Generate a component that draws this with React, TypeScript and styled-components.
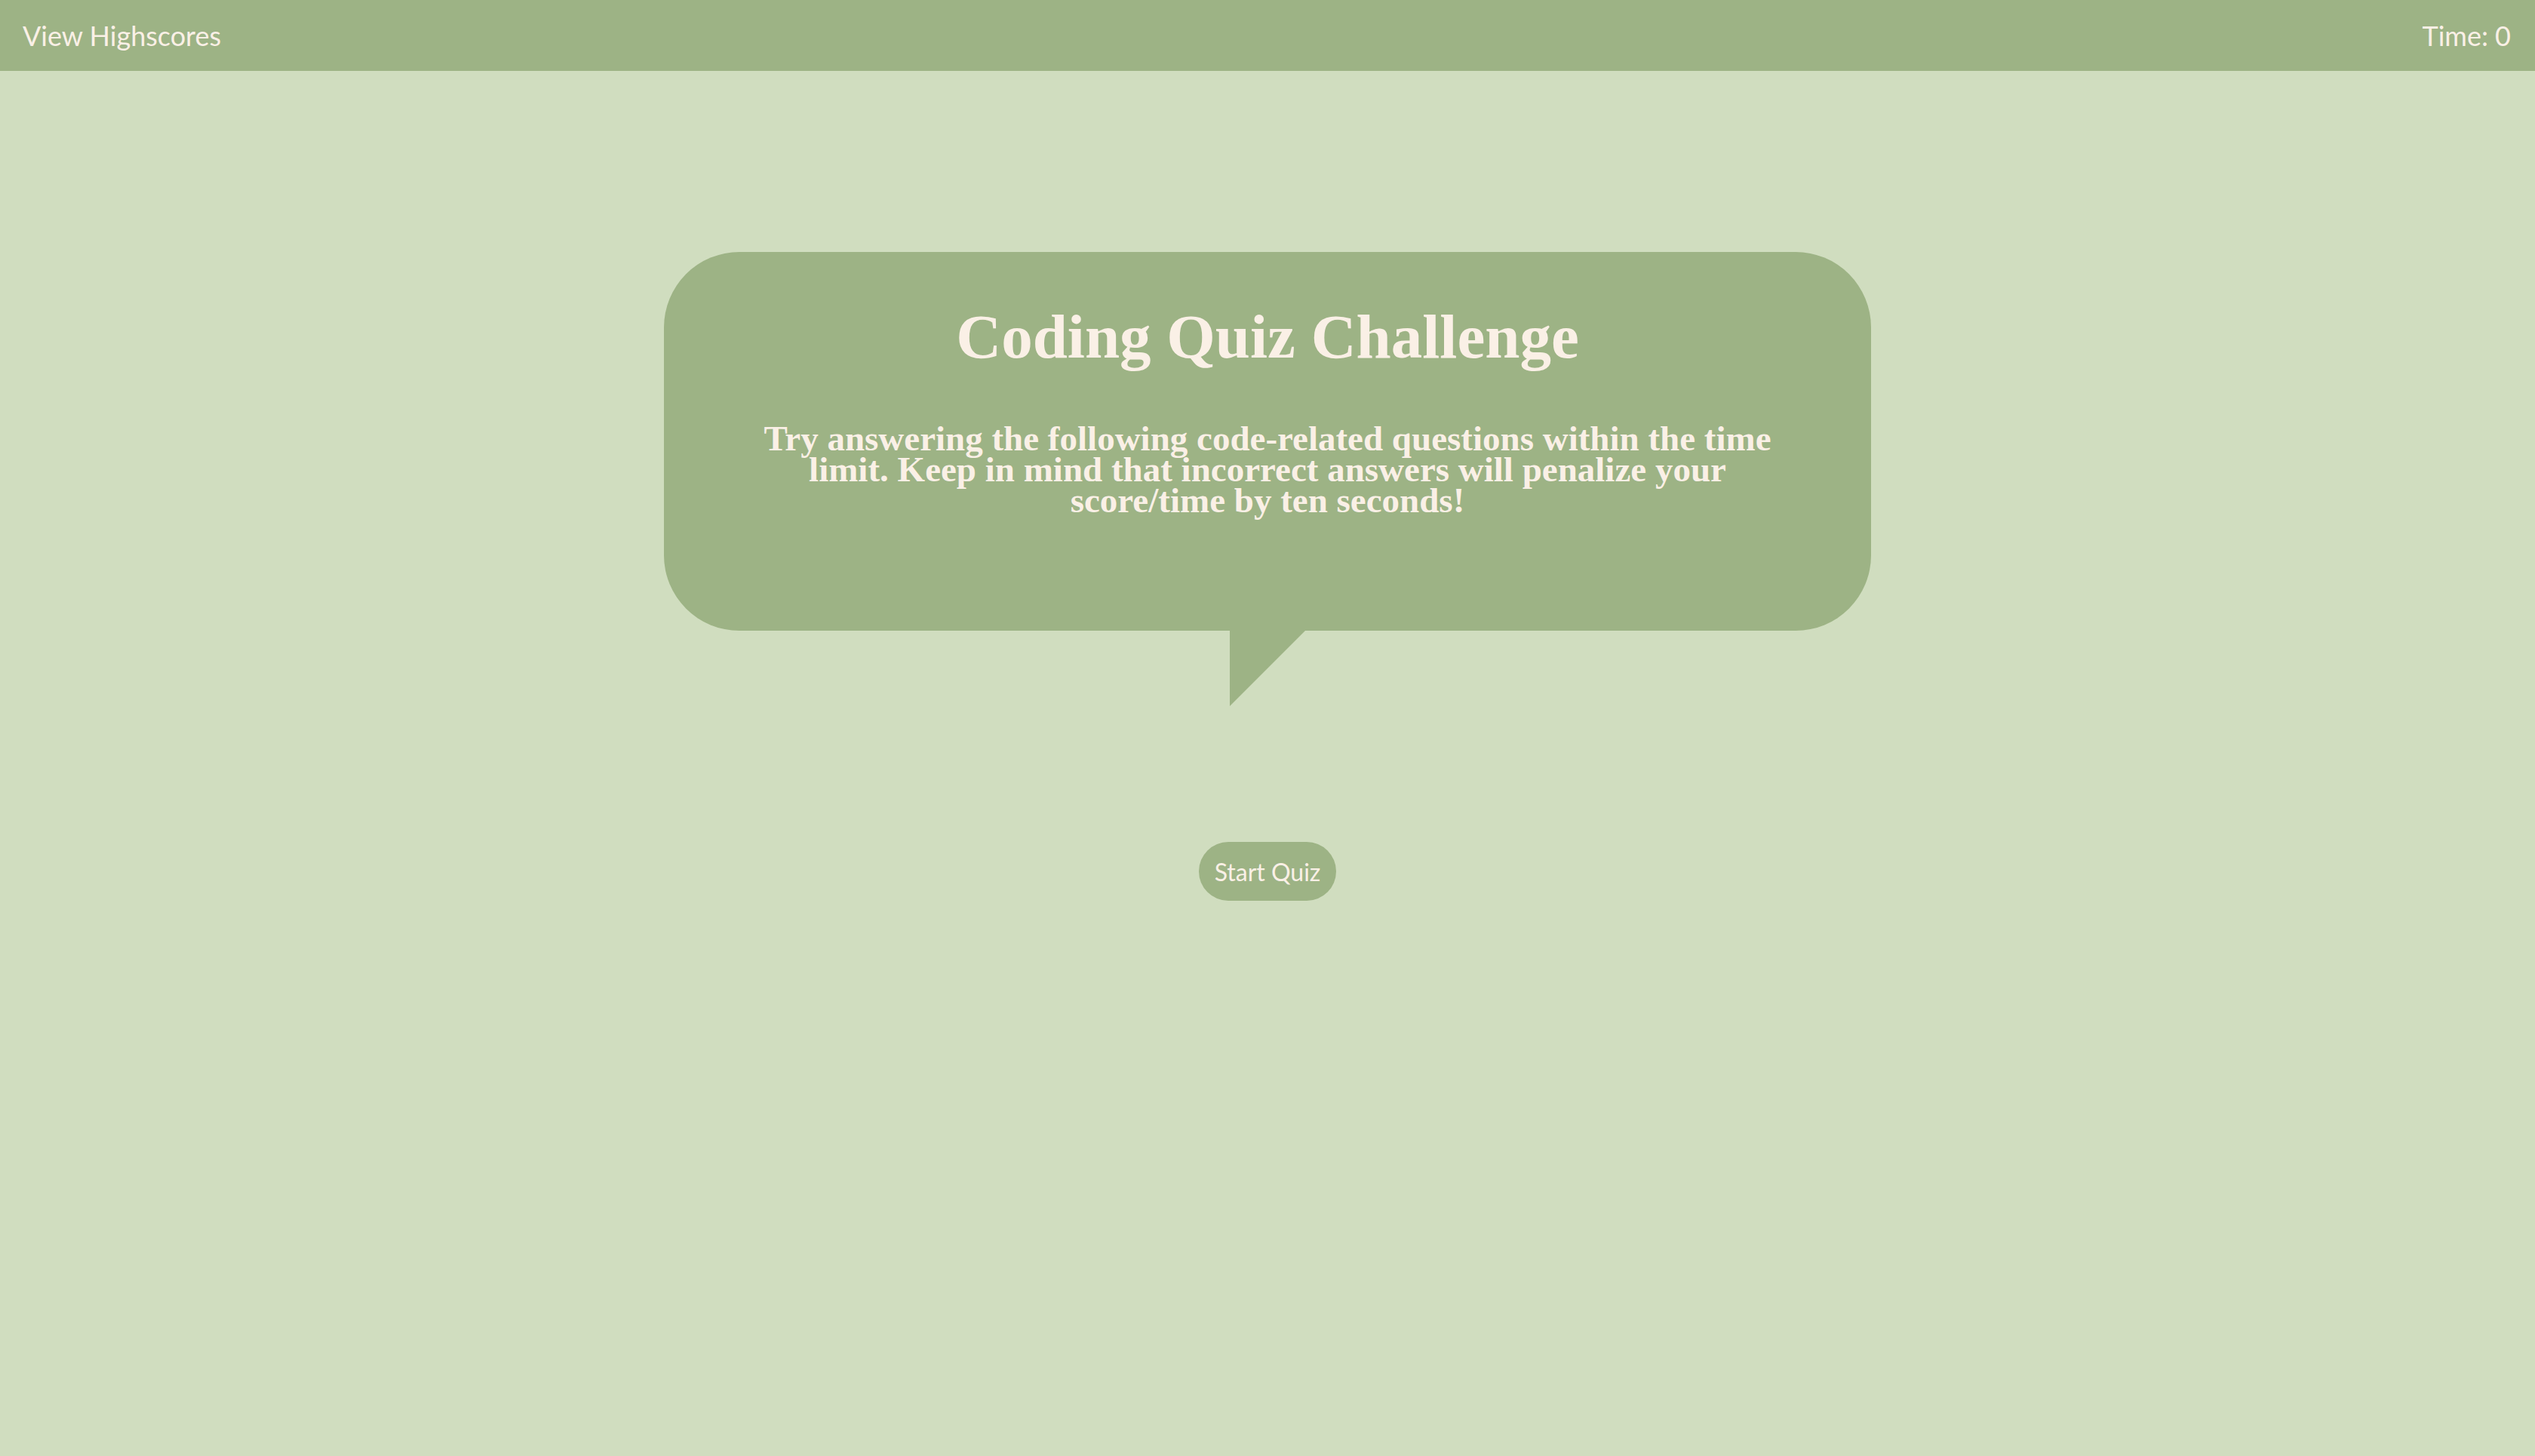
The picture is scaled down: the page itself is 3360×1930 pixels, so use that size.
import React from "react";
import styled, { createGlobalStyle } from "styled-components";

const Global = createGlobalStyle`
  html, body { margin: 0; padding: 0; background: #d0ddbf; }
  body { min-height: 100vh; font-family: Lato, "Open Sans", sans-serif; }
  * { box-sizing: border-box; }
`;

const Header = styled.header`
  height: 94px;
  background: #9db385;
  display: flex;
  align-items: center;
  justify-content: space-between;
  padding: 0 32px 0 30px;
  color: #faf0e6;
  font-family: Lato, "Open Sans", sans-serif;
  font-size: 36px;
`;

const HeaderLink = styled.a`
  color: inherit;
  text-decoration: none;
  cursor: pointer;
`;

const Timer = styled.span``;

const Main = styled.main`
  display: flex;
  flex-direction: column;
  align-items: center;
  padding-top: 240px;
`;

const Bubble = styled.section`
  position: relative;
  width: 1600px;
  height: 502px;
  background: #9db385;
  border-radius: 100px;
  padding: 71px 80px 0;
  text-align: center;
  color: #faf0e6;
  font-family: "Liberation Serif", "DejaVu Serif", serif;
  font-weight: 700;
  margin-bottom: 100px;
  &::after {
    content: "";
    position: absolute;
    top: 100%;
    left: 750px;
    width: 0;
    height: 0;
    border-top: 100px solid #9db385;
    border-right: 100px solid transparent;
  }
`;

const Title = styled.h1`
  margin: 0;
  font-size: 83px;
  line-height: 83px;
  font-weight: 700;
`;

const Intro = styled.p`
  margin: 73px auto 0;
  max-width: 1400px;
  font-size: 47px;
  line-height: 41px;
`;

const StartButton = styled.button`
  margin-top: 180px;
  height: 78px;
  padding: 0 21px;
  border: none;
  border-radius: 39px;
  background: #9db385;
  color: #faf0e6;
  font-family: Lato, "Open Sans", sans-serif;
  font-size: 32px;
  cursor: pointer;
`;

export default function App() {
  return (
    <>
      <Global />
      <Header>
        <HeaderLink>View Highscores</HeaderLink>
        <Timer>Time: 0</Timer>
      </Header>
      <Main>
        <Bubble>
          <Title>Coding Quiz Challenge</Title>
          <Intro>
            Try answering the following code-related questions within the time
            limit. Keep in mind that incorrect answers will penalize your
            score/time by ten seconds!
          </Intro>
        </Bubble>
        <StartButton>Start Quiz</StartButton>
      </Main>
    </>
  );
}
